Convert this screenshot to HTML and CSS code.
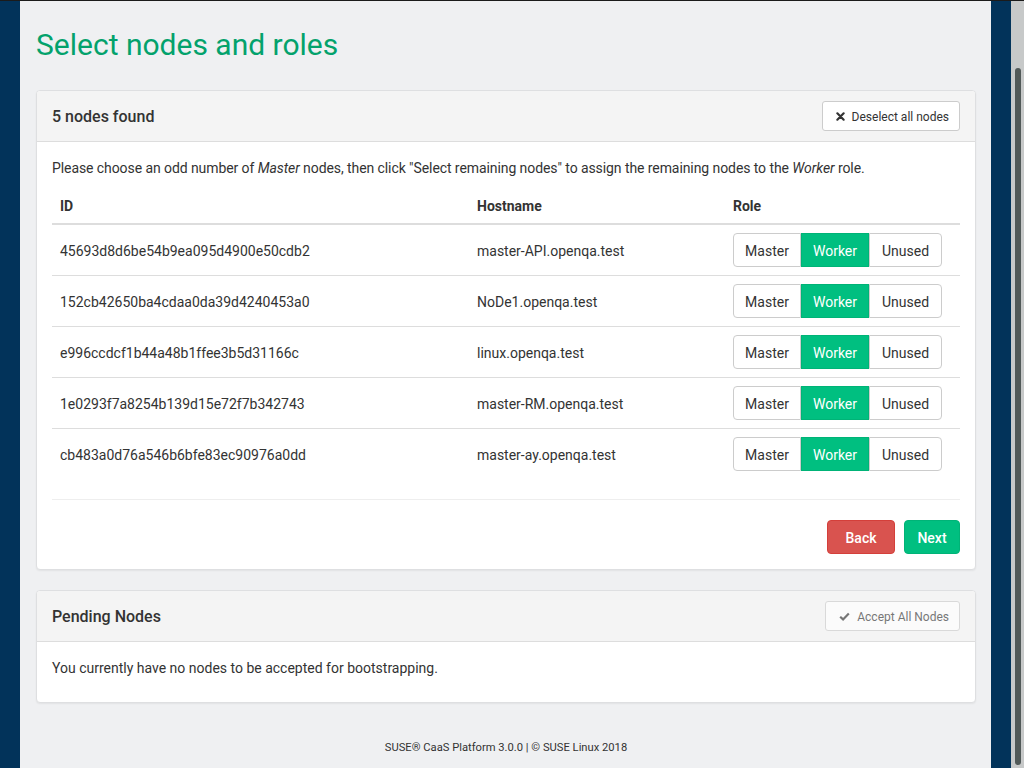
FILE: index.html
```html
<!DOCTYPE html>
<html>
<head>
<meta charset="utf-8">
<title>Select nodes and roles</title>
<link rel="stylesheet" href="styles.css">
</head>
<body>
<div class="frame">
  <div class="side"></div>
  <main class="main">
    <h1 class="title">Select nodes and roles</h1>

    <section class="panel">
      <header class="panel-head">
        <h2 class="panel-title">5 nodes found</h2>
        <button class="btn btn-sm">
          <svg class="ico" viewBox="0 0 10 10" width="9" height="9"><path d="M1.5 1.5 L8.5 8.5 M8.5 1.5 L1.5 8.5" stroke="#333" stroke-width="2.4" stroke-linecap="round"/></svg>
          Deselect all nodes
        </button>
      </header>
      <div class="panel-body">
        <p class="intro">Please choose an odd number of <em>Master</em> nodes, then click "Select remaining nodes" to assign the remaining nodes to the <em>Worker</em> role.</p>
        <table class="nodes">
          <thead>
            <tr><th class="c-id">ID</th><th class="c-host">Hostname</th><th class="c-role">Role</th></tr>
          </thead>
          <tbody>
            <tr><td class="txt">45693d8d6be54b9ea095d4900e50cdb2</td><td class="txt">master-API.openqa.test</td><td><div class="group"><span class="seg">Master</span><span class="seg on">Worker</span><span class="seg">Unused</span></div></td></tr>
            <tr><td class="txt">152cb42650ba4cdaa0da39d4240453a0</td><td class="txt">NoDe1.openqa.test</td><td><div class="group"><span class="seg">Master</span><span class="seg on">Worker</span><span class="seg">Unused</span></div></td></tr>
            <tr><td class="txt">e996ccdcf1b44a48b1ffee3b5d31166c</td><td class="txt">linux.openqa.test</td><td><div class="group"><span class="seg">Master</span><span class="seg on">Worker</span><span class="seg">Unused</span></div></td></tr>
            <tr><td class="txt">1e0293f7a8254b139d15e72f7b342743</td><td class="txt">master-RM.openqa.test</td><td><div class="group"><span class="seg">Master</span><span class="seg on">Worker</span><span class="seg">Unused</span></div></td></tr>
            <tr><td class="txt">cb483a0d76a546b6bfe83ec90976a0dd</td><td class="txt">master-ay.openqa.test</td><td><div class="group"><span class="seg">Master</span><span class="seg on">Worker</span><span class="seg">Unused</span></div></td></tr>
          </tbody>
        </table>
        <hr class="sep">
        <div class="actions">
          <button class="btn btn-back">Back</button>
          <button class="btn btn-next">Next</button>
        </div>
      </div>
    </section>

    <section class="panel">
      <header class="panel-head">
        <h2 class="panel-title">Pending Nodes</h2>
        <button class="btn btn-sm disabled">
          <svg class="ico" viewBox="0 0 12 10" width="11" height="9"><path d="M1.2 5.2 L4.4 8.2 L10.8 1.6" fill="none" stroke="#333" stroke-width="2.4" stroke-linejoin="miter"/></svg>
          Accept All Nodes
        </button>
      </header>
      <div class="panel-body">
        <p class="msg">You currently have no nodes to be accepted for bootstrapping.</p>
      </div>
    </section>

    <footer class="foot">SUSE® CaaS Platform 3.0.0 | © SUSE Linux 2018</footer>
  </main>
  <div class="side"></div>
  <div class="scroll"><div class="scroll-gap"></div><div class="thumb"></div></div>
</div>
</body>
</html>
```

FILE: styles.css
```css
* { box-sizing: border-box; }
html, body { margin: 0; padding: 0; }
body {
  font-family: Roboto, "Liberation Sans", sans-serif;
  font-size: 14px;
  line-height: 20px;
  color: #333;
  background: #eff0f2;
}
.frame {
  display: flex;
  height: 768px;
  overflow: hidden;
  border-top: 1px solid #1b1b1b;
}
.side {
  width: 20px;
  flex: none;
  background: #02335a;
}
.main {
  flex: 1;
  background: #eff0f2;
  padding: 0 15px 0 16px;
  display: flex;
  flex-direction: column;
}
.scroll {
  width: 13px;
  flex: none;
  background: #c7c9c9;
  display: flex;
  flex-direction: column;
  align-items: center;
  padding-bottom: 3px;
}
.scroll-gap { height: 67px; flex: none; }
.thumb {
  flex: 1;
  width: 6px;
  background: #515958;
  border-radius: 3px;
}
.title {
  margin: 26px 0 0;
  height: 63px;
  font-size: 30px;
  line-height: 36px;
  font-weight: 400;
  color: #03a26c;
}
.panel {
  background: #fff;
  border: 1px solid #dedfe1;
  border-radius: 4px;
  box-shadow: 0 1px 2px rgba(0,0,0,0.06);
  margin-bottom: 20px;
  overflow: hidden;
}
.panel-head {
  background: #f4f4f4;
  border-bottom: 1px solid #dddddd;
  padding: 10px 15px;
  height: 51px;
  display: flex;
  align-items: center;
  justify-content: space-between;
}
.panel-title {
  margin: 0;
  padding-top: 2px;
  font-size: 16px;
  font-weight: 500;
  color: #333;
}
.btn {
  font-family: inherit;
  cursor: pointer;
  display: inline-flex;
  align-items: center;
  justify-content: center;
  border-radius: 4px;
}
.btn-sm {
  height: 30px;
  padding: 1px 10px 0 13px;
  font-size: 12px;
  background: #fff;
  color: #333;
  border: 1px solid #cccccc;
  border-radius: 3px;
  gap: 7px;
}
.btn-sm.disabled { opacity: 0.65; }
.ico { display: block; }
.panel-body { padding: 15px; }
.intro { margin: 1px 0 9px; letter-spacing: -0.08px; }
.nodes {
  width: 100%;
  border-collapse: collapse;
}
.nodes th {
  text-align: left;
  font-weight: 700;
  padding: 9px 8px 7px;
  height: 36px;
  border-bottom: 2px solid #dddddd;
}
.c-id { width: 417px; }
.c-host { width: 256px; }
.nodes td {
  padding: 8px;
  height: 51px;
  border-bottom: 1px solid #dddddd;
  vertical-align: middle;
}
.nodes td.txt { padding: 9px 8px 7px; }
.nodes tr:last-child td { border-bottom: 0; height: 50px; }
.group { display: inline-flex; }
.seg {
  height: 34px;
  padding: 1px 0 0;
  display: flex;
  align-items: center;
  justify-content: center;
  border: 1px solid #cccccc;
  background: #fff;
  color: #333;
}
.seg:first-child { border-radius: 4px 0 0 4px; width: 68px; }
.seg:nth-child(2) { width: 68px; }
.seg:last-child { border-radius: 0 4px 4px 0; width: 73px; }
.seg.on {
  background: #00bf80;
  border-color: #00b377;
  color: #fff;
}
.sep {
  border: 0;
  border-top: 1px solid #eeeeee;
  margin: 20px 0;
}
.actions {
  display: flex;
  justify-content: flex-end;
  gap: 9px;
}
.btn-back, .btn-next {
  height: 34px;
  font-size: 14px;
  font-weight: 500;
  color: #fff;
  padding: 1px 0 0;
}
.btn-back { width: 68px; background: #d9534f; border: 1px solid #d43f3a; }
.btn-next { width: 56px; background: #00bf80; border: 1px solid #00b377; }
.msg { margin: 1px 0 9px; }
.foot {
  margin-top: 17px;
  text-align: center;
  font-size: 11.2px;
  line-height: 16px;
  color: #333;
}
```
